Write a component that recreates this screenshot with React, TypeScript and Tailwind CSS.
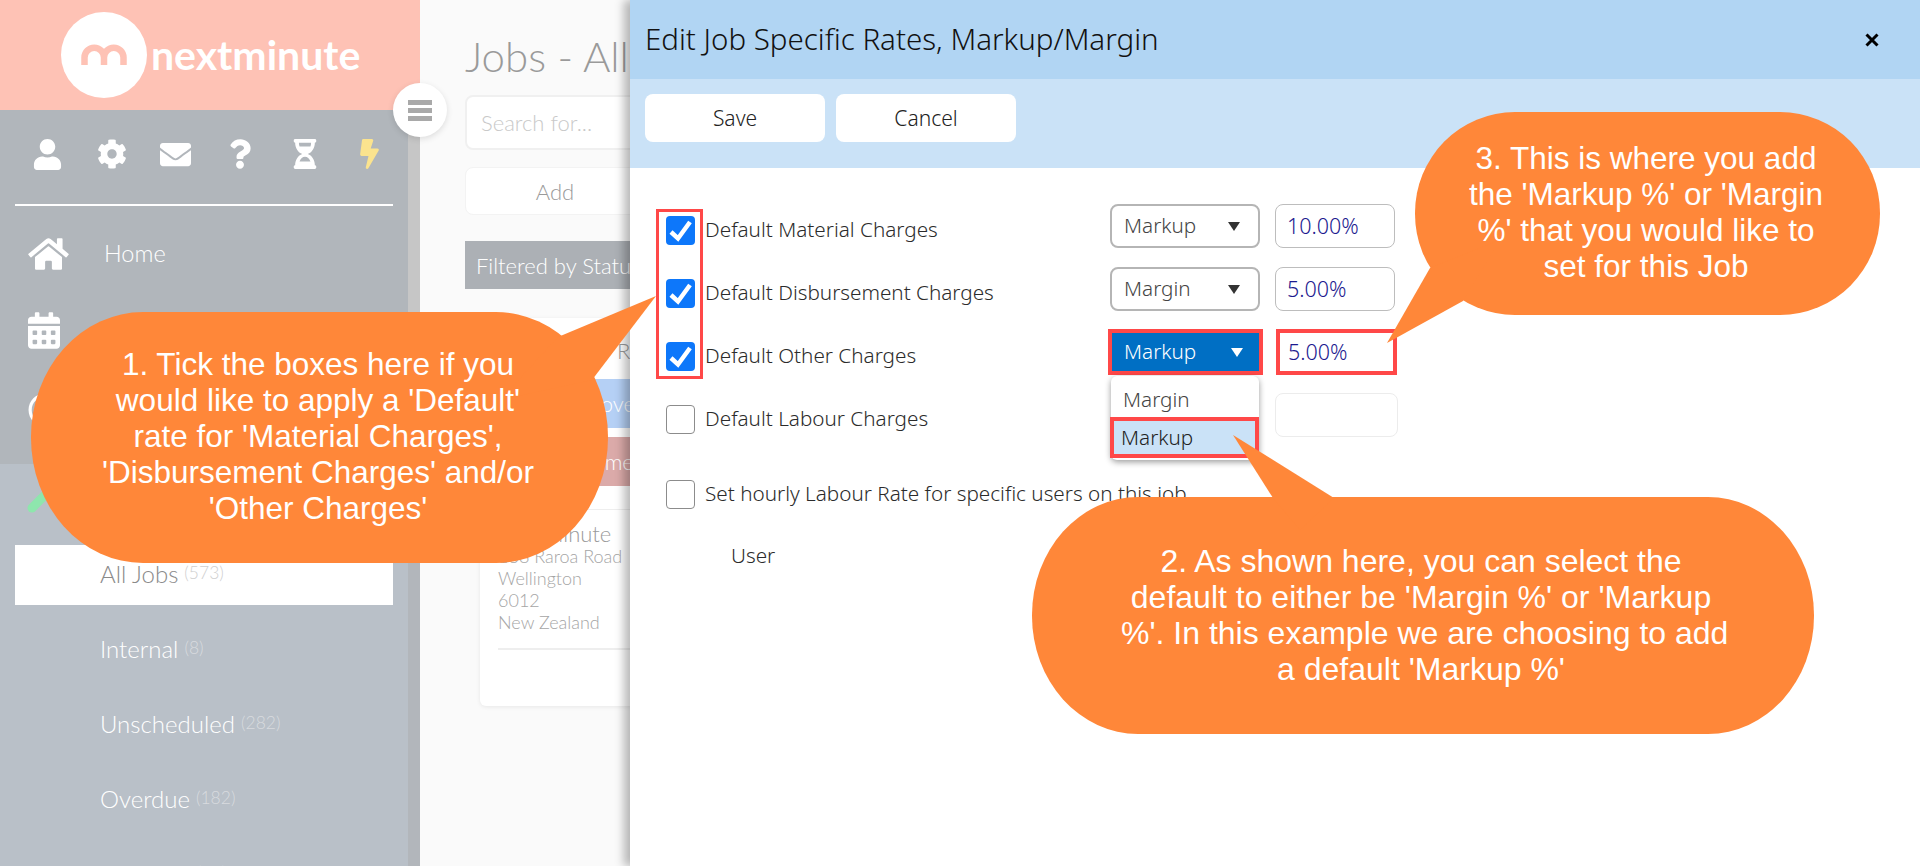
import React from "react";
import { FaUser, FaCog, FaEnvelope, FaQuestion, FaHourglassHalf, FaBolt, FaHome, FaCalendarAlt, FaRegClock } from "react-icons/fa";

const ui = "font-['Noto_Sans','Open_Sans',sans-serif]";
const thin = "font-['Lato','Open_Sans',sans-serif] font-light";

function Check({ on }: { on: boolean }) {
  return on ? (
    <div className="w-[29px] h-[29px] shrink-0 rounded-[4px] bg-[#0d77fa] mt-[12px]">
      <svg viewBox="0 0 29 29" className="w-[29px] h-[29px]">
        <path d="M5 16l7 6.5L24 6" fill="none" stroke="#fff" strokeWidth="4.5" />
      </svg>
    </div>
  ) : (
    <div className="w-[29px] h-[29px] shrink-0 rounded-[4px] bg-white border border-[#8c8c8c] mt-[12px]" />
  );
}

function Label({ children, w = "w-[404px]" }: { children: React.ReactNode; w?: string }) {
  return <div className={`${w} shrink-0 ml-[10px] mt-[11px] h-[29px] leading-[29px] whitespace-nowrap text-[20.7px] font-light text-[#2b2b2b]`}>{children}</div>;
}

function Select({ value }: { value: string }) {
  return (
    <div className="w-[150px] h-[44px] shrink-0 ml-px rounded-[8px] border-2 border-[#b5b5b5] bg-white flex items-center justify-between pl-[12px] pr-[18px] text-[20.7px] font-light text-[#444]">
      <span>{value}</span>
      <svg viewBox="0 0 12 9" className="w-[12px] h-[9px]"><path d="M0 0h12L6 9z" fill="#333" /></svg>
    </div>
  );
}

function Rate({ value }: { value: string }) {
  return <div className="w-[120px] h-[44px] ml-[15px] shrink-0 rounded-[8px] border border-[#bdbdbd] bg-white flex items-center pl-[11px] text-[21.5px] text-[#1c1a8f] font-light">{value}</div>;
}

function Job({ name, count, active }: { name: string; count: string; active?: boolean }) {
  return (
    <div className={`h-[60px] shrink-0 flex items-center pl-[85px] pb-[3px] ${active ? "bg-white text-[#8a8a8a]" : "text-white"}`}>
      <span className="text-[24px]">{name}</span>
      <span className={`ml-[6px] text-[17.5px] ${active ? "text-[#cfcfcf]" : "text-[#d8dbdf]"}`}>{count}</span>
    </div>
  );
}

function Bubble({ cls, lines }: { cls: string; lines: string[] }) {
  return (
    <div className={`absolute text-center text-white whitespace-nowrap leading-[36px] font-['Liberation_Sans',Arial,sans-serif] ${cls}`}>
      {lines.map((l) => <div key={l}>{l}</div>)}
    </div>
  );
}

export default function App() {
  return (
    <div className={`relative w-[1920px] h-[866px] overflow-hidden flex bg-white ${ui}`}>
      {/* sidebar */}
      <aside className={`w-[420px] h-[866px] shrink-0 flex flex-col overflow-hidden ${thin}`}>
        <div className="h-[110px] shrink-0 bg-[#fec2b5] flex items-center pl-[61px]">
          <div className="w-[86px] h-[86px] rounded-full bg-white shrink-0">
            <svg viewBox="0 0 86 86" className="w-[86px] h-[86px]">
              <path d="M23.5 53V45.5a9.75 9.75 0 0 1 19.5 0V53M43 45.5a9.75 9.75 0 0 1 19.5 0V53" fill="none" stroke="#fec2b5" strokeWidth="6.5" />
            </svg>
          </div>
          <span className="ml-[4px] text-[41px] leading-none text-white font-['Lato',sans-serif] font-bold -mt-[1px]">nextminute</span>
        </div>
        <div className="flex flex-1 min-h-0">
          <div className="w-[408px] shrink-0 flex flex-col">
            <div className="h-[354px] shrink-0 bg-[#b1b6bb] flex flex-col text-white">
              <div className="h-[94px] shrink-0 pl-[15px] flex items-center pb-[6px]">
                <div className="w-[64.4px] flex justify-center"><FaUser className="w-[31px] h-[31px]" /></div>
                <div className="w-[64.4px] flex justify-center"><FaCog className="w-[30px] h-[30px]" /></div>
                <div className="w-[64.4px] flex justify-center"><FaEnvelope className="w-[31px] h-[31px]" /></div>
                <div className="w-[64.4px] flex justify-center"><FaQuestion className="w-[22px] h-[30px]" /></div>
                <div className="w-[64.4px] flex justify-center"><FaHourglassHalf className="w-[24px] h-[30px]" /></div>
                <div className="w-[64.4px] flex justify-center"><FaBolt className="w-[21px] h-[30px] text-[#fbe38e]" /></div>
              </div>
              <div className="mx-[15px] h-[2px] bg-white shrink-0" />
              <div className="h-[88px] shrink-0 flex items-center pl-[28px] pt-[8px]">
                <FaHome className="w-[41px] h-[36px]" />
                <span className="ml-[35px] text-[23.5px]">Home</span>
              </div>
              <div className="h-[72px] shrink-0 flex items-center pl-[28px]"><FaCalendarAlt className="w-[32px] h-[37px]" /></div>
              <div className="h-[78px] shrink-0 flex items-center pl-[28px] pt-[10px]"><FaRegClock className="w-[34px] h-[34px]" /></div>
            </div>
            <div className="flex-1 bg-[#b9c0c8] pt-[81px] px-[15px] flex flex-col gap-[15px]">
              <Job name="All Jobs" count="(573)" active />
              <Job name="Internal" count="(8)" />
              <Job name="Unscheduled" count="(282)" />
              <Job name="Overdue" count="(182)" />
              <Job name="Archived" count="(91)" />
            </div>
          </div>
          <div className="flex-1 flex flex-col">
            <div className="h-[354px] shrink-0 bg-[#c6c6c6]" />
            <div className="flex-1 bg-[#b2b6bb]" />
          </div>
        </div>
      </aside>

      {/* main page behind the dialog */}
      <main className={`w-[210px] shrink-0 bg-[#fafafa] overflow-hidden pl-[45px] ${thin}`}>
        <div className="w-[600px]">
          <div className="h-[95px] pt-[28px] text-[42px] leading-[56px] text-[#9a9a9a] whitespace-nowrap">Jobs - All</div>
          <div className="h-[55px] bg-white border-2 border-[#f0f0f0] rounded-[8px] flex items-center pl-[14px] text-[22px] text-[#c9c9c9]">Search for...</div>
          <div className="mt-[17px] h-[48px] w-[180px] bg-white border border-[#f3f3f3] rounded-[8px] flex items-center justify-center text-[22px] text-[#9a9a9a]">Add</div>
          <div className="mt-[26px] h-[48px] bg-[#acb0b5] flex items-center pl-[11px] text-[22px] text-white whitespace-nowrap">Filtered by Status</div>
          <div className="mt-[29px] ml-[15px] h-[388px] bg-white rounded-[6px] shadow-[0_1px_4px_rgba(0,0,0,0.08)] pl-[18px] text-[#a5a5a5]">
            <div className="h-[61px] pt-[16px] pl-[119px] text-[22px] text-[#9a9a9a]">R</div>
            <div className="h-[49px] bg-[#b5d0f5] flex items-center pl-[57px] text-[22px] text-white">Approve</div>
            <div className="mt-[9px] h-[49px] bg-[#dbaaa9] flex items-center pl-[62px] text-[22px] text-white">Comments</div>
            <div className="mt-[23px] h-px bg-[#eeeeee]" />
            <div className="pt-[12px] text-[22px] leading-[24px] text-[#9a9a9a]">NextMinute</div>
            <div className="text-[18px] leading-[22px] -mt-px">
              <div>138 Raroa Road</div>
              <div>Wellington</div>
              <div>6012</div>
              <div>New Zealand</div>
            </div>
            <div className="mt-[15px] h-[2px] bg-[#eeeeee]" />
          </div>
        </div>
      </main>

      {/* dialog */}
      <section className="w-[1290px] shrink-0 bg-white flex flex-col shadow-[-6px_0_9px_rgba(0,0,0,0.28)] z-10">
        <header className="h-[79px] shrink-0 bg-[#b1d5f3] flex items-center justify-between pl-[15px] pr-[41px]">
          <h1 className="text-[29.5px] font-light text-[#111]">Edit Job Specific Rates, Markup/Margin</h1>
          <svg viewBox="0 0 14 14" className="w-[14px] h-[14px]"><path d="M1.5 1.5l11 11M12.5 1.5l-11 11" stroke="#000" strokeWidth="3" /></svg>
        </header>
        <div className="h-[89px] shrink-0 bg-[#cae2f7] flex items-start gap-[11px] pl-[15px] pt-[15px]">
          <div className="w-[180px] h-[48px] rounded-[8px] bg-white flex items-center justify-center text-[21px] font-light text-[#222] pt-[2px]">Save</div>
          <div className="w-[180px] h-[48px] rounded-[8px] bg-white flex items-center justify-center text-[21px] font-light text-[#222] pt-[2px]">Cancel</div>
        </div>
        <div className="relative pt-[36px] pl-[36px]">
          <div className="absolute left-[26px] top-[41px] w-[47px] h-[170px] border-[3.5px] border-[#ff4848]" />
          <div className="h-[63px] flex">
            <Check on /><Label>Default Material Charges</Label><Select value="Markup" /><Rate value="10.00%" />
          </div>
          <div className="h-[63px] flex">
            <Check on /><Label>Default Disbursement Charges</Label><Select value="Margin" /><Rate value="5.00%" />
          </div>
          <div className="h-[63px] flex relative z-10">
            <Check on /><Label w="w-[403px]">Default Other Charges</Label>
            <div className="relative -mt-[1px] w-[155px] h-[46px] shrink-0 border-4 border-[#ff4848] bg-[#006fc4] flex items-center justify-between pl-[12px] pr-[16px] text-[20.7px] text-white font-light">
              <span>Markup</span>
              <svg viewBox="0 0 12 9" className="w-[12px] h-[9px]"><path d="M0 0h12L6 9z" fill="#fff" /></svg>
              <div className="absolute -left-[1px] top-[43px] w-[148px] h-[84px] rounded-[6px] bg-white shadow-[0_2px_6px_rgba(0,0,0,0.4)] text-[#444]">
                <div className="h-[41px] flex items-center pl-[12px] pt-[6px]">Margin</div>
                <div className="-ml-px h-[41px] border-4 border-[#ff4848] bg-[#cae2f7] flex items-center pl-[7px] pt-px text-[#222]">Markup</div>
              </div>
            </div>
            <div className="ml-[13px] -mt-[1px] w-[121px] h-[46px] shrink-0 border-4 border-[#ff4848] bg-white flex items-center pl-[8px] text-[21.5px] font-light text-[#1c1a8f]">5.00%</div>
          </div>
          <div className="h-[75px] flex">
            <Check on={false} /><Label>Default Labour Charges</Label>
            <div className="w-[151px] shrink-0" />
            <div className="ml-[15px] w-[123px] h-[44px] rounded-[8px] border border-[#ececec]" />
          </div>
          <div className="h-[63px] flex">
            <Check on={false} /><Label>Set hourly Labour Rate for specific users on this job</Label>
          </div>
          <div className="pl-[65px] text-[20.7px] font-light text-[#2b2b2b] leading-[29px] pt-[10px]">User</div>
        </div>
      </section>

      {/* hamburger toggle */}
      <div className="absolute left-[393px] top-[83px] z-10 w-[54px] h-[54px] rounded-full bg-white shadow-[0_2px_6px_rgba(0,0,0,0.12)] flex flex-col items-center justify-center gap-[3px]">
        <div className="w-[24px] h-[5px] bg-[#a9a9a9]" />
        <div className="w-[24px] h-[5px] bg-[#a9a9a9]" />
        <div className="w-[24px] h-[5px] bg-[#a9a9a9]" />
      </div>

      {/* green tool icon under the first callout */}
      <svg viewBox="0 0 60 60" className="absolute left-[20px] top-[465px] w-[60px] h-[60px] z-10">
        <path d="M12 43l13-13" stroke="#8ee6ad" strokeWidth="9" strokeLinecap="round" />
        <path d="M24 30l20-24" stroke="#8ee6ad" strokeWidth="5" />
      </svg>

      {/* callouts */}
      <svg viewBox="0 0 1920 866" className="absolute inset-0 w-[1920px] h-[866px] z-20 pointer-events-none">
        <g fill="#ff8739">
          <rect x="31" y="312" width="577" height="251" rx="112" ry="125" />
          <polygon points="558,337 656,296 592,380 500,400" />
          <rect x="1032" y="497" width="782" height="237" rx="106" ry="118" />
          <polygon points="1273,498 1233,435 1334,498 1300,530" />
          <rect x="1415" y="112" width="465" height="203" rx="100" ry="101" />
          <polygon points="1430,268 1387,343 1463,301 1500,240" />
        </g>
      </svg>
      <div className="absolute inset-0 z-30 pointer-events-none">
        <Bubble cls="left-[68px] top-[346px] w-[500px] text-[31.5px]" lines={["1. Tick the boxes here if you", "would like to apply a 'Default'", "rate for 'Material Charges',", "'Disbursement Charges' and/or", "'Other Charges'"]} />
        <Bubble cls="left-[1121px] top-[543px] w-[600px] text-[32px]" lines={["2. As shown here, you can select the", "default to either be 'Margin %' or 'Markup", "%'. In this example we are choosing to add", "a default 'Markup %'"]} />
        <Bubble cls="left-[1446px] top-[140px] w-[400px] text-[31.5px]" lines={["3. This is where you add", "the 'Markup %' or 'Margin", "%' that you would like to", "set for this Job"]} />
      </div>
    </div>
  );
}
